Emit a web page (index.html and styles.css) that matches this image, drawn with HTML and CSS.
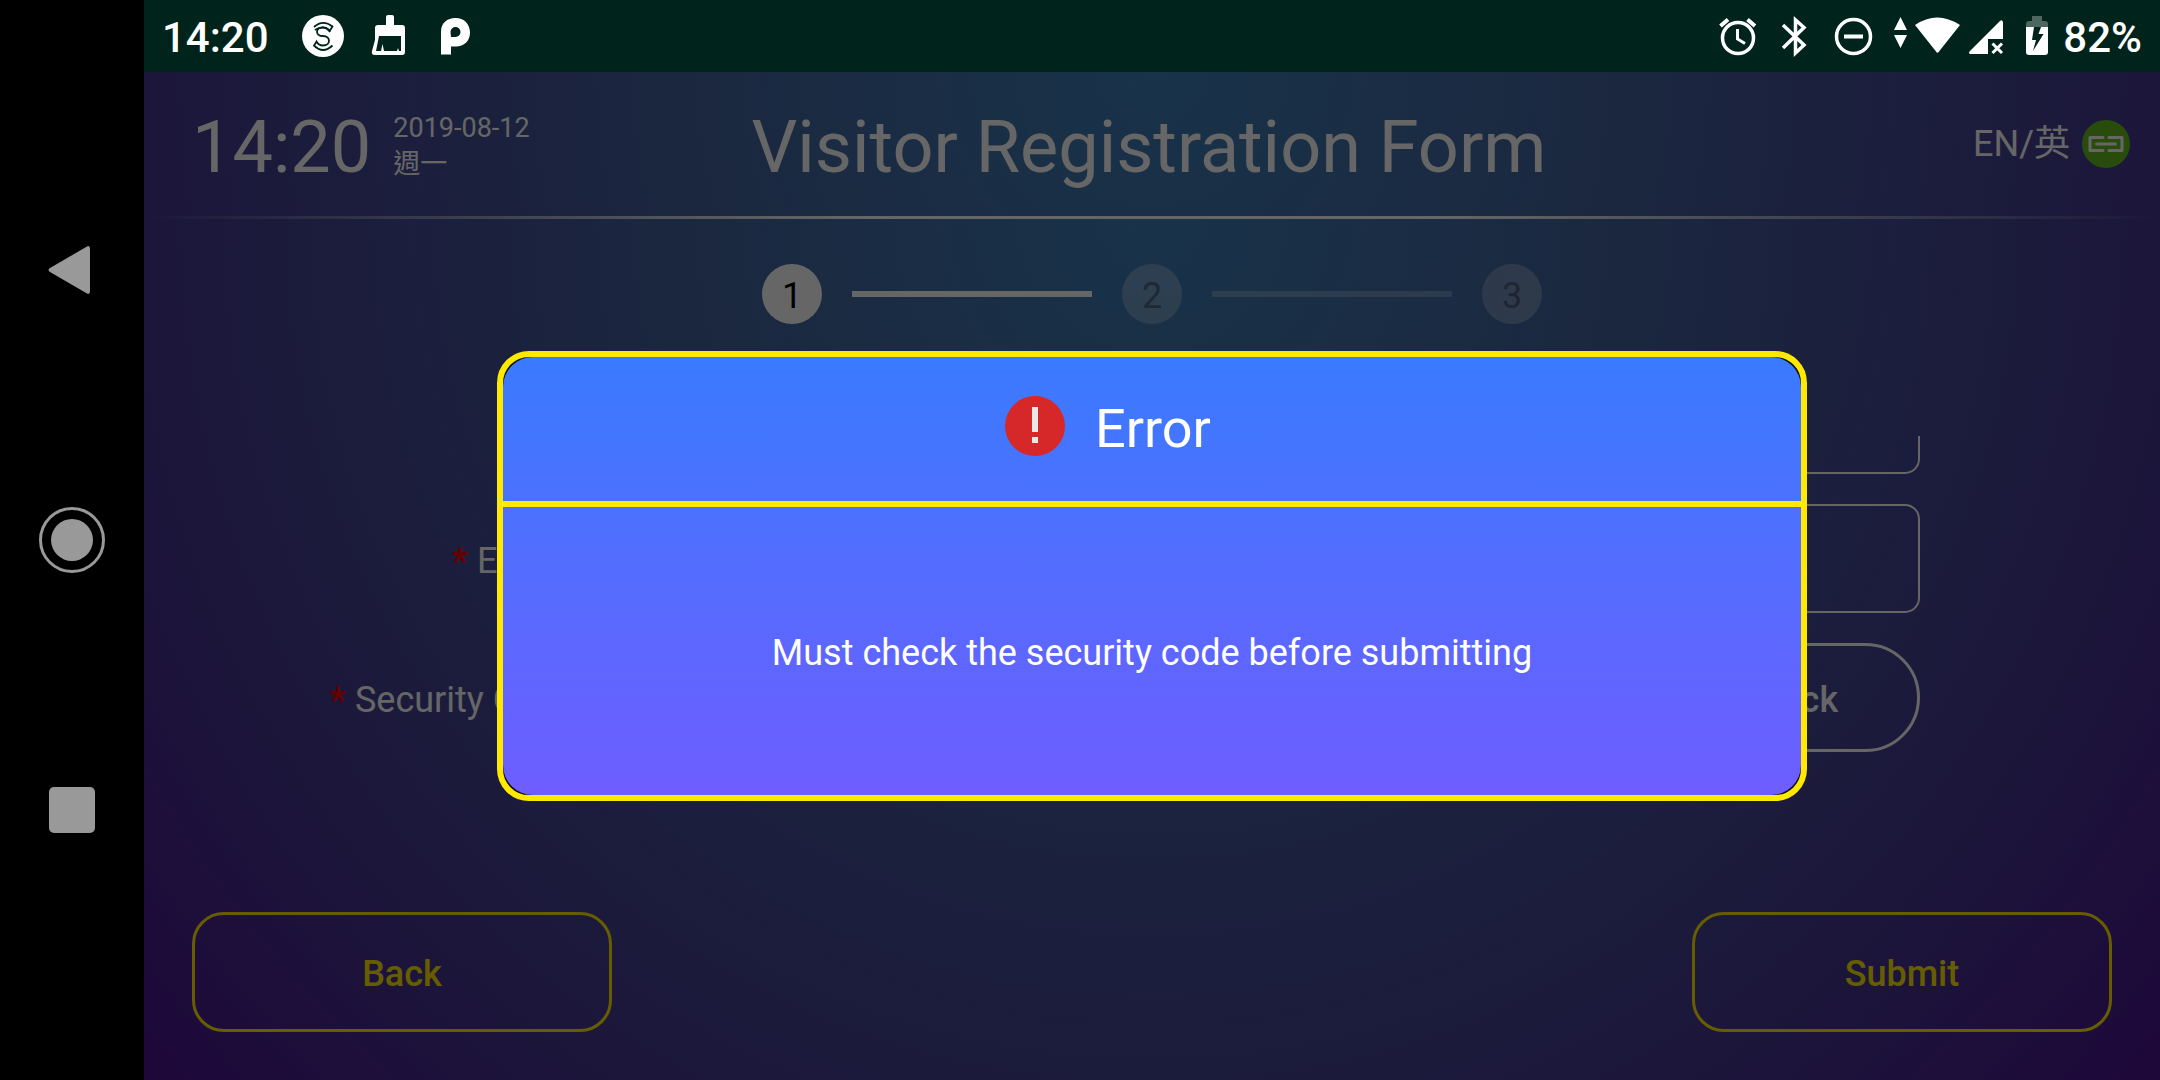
FILE: index.html
```html
<!DOCTYPE html>
<html lang="en">
<head>
  <meta charset="utf-8">
  <meta name="viewport" content="width=device-width, initial-scale=1">
  <title>Visitor Registration Form</title>
  <link rel="stylesheet" href="styles.css">
</head>
<body>
<div class="device">
  <nav class="navbar" aria-label="System navigation">
    <button class="navbar-button" type="button" aria-label="Back">
      <svg width="48" height="60" viewBox="0 0 48 60"><path d="M2 28 L39 6.5 Q42 5 42 9 V51 Q42 55 39 53.500 L2 32 Q-1 30 2 28Z" fill="#999"/></svg>
    </button>
    <button class="navbar-button" type="button" aria-label="Home">
      <svg width="66" height="66" viewBox="0 0 66 66"><circle cx="33" cy="33" r="31.500" fill="none" stroke="#999" stroke-width="3"/><circle cx="33" cy="33" r="21" fill="#999"/></svg>
    </button>
    <button class="navbar-button" type="button" aria-label="Recent apps">
      <svg width="46" height="46" viewBox="0 0 46 46"><rect width="46" height="46" rx="5" fill="#999"/></svg>
    </button>
  </nav>

  <div class="screen">
    <div class="statusbar">
      <div class="status-left">
        <span class="status-clock">14:20</span>
        <svg class="status-icon" viewBox="0 0 48 48"><circle cx="24" cy="24" r="21" fill="#fff"/><g fill="none" stroke="#00241b" stroke-width="1.800"><path d="M15 15Q24 7 33.500 14.500L31 18.500Q24 12.500 16 18"/><path d="M31 20Q28 15.500 24 15.500C16 15.500 16 24 24 24C32 24 32 33.500 24 33.500Q19.500 33.500 17.500 29.500L15 33.500Q24 42.500 33.500 33.500"/></g></svg>
        <svg class="status-icon" viewBox="0 0 48 48" fill="#fff"><path d="M21 5Q21 3 23 3H27Q29 3 29 5V13H37Q40 13 40 16V40Q40 43 37 43H10Q6 43 7 39L10 28V16Q10 13 13 13H21Z"/><path fill="#00241b" d="M14 24H36V39H34L33 36L32 39H19L17.500 32L16 39H11Z"/></svg>
        <svg class="status-icon" viewBox="0 0 48 48"><path fill="#fff" fill-rule="evenodd" d="M10 42.500V20C10 11 16 6 24.500 6C33 6 39 12 39 20.500C39 29 33 34.500 25 34.500H20V42.500ZM20 25H24.500A5 5 0 1 0 19.500 20Z"/></svg>
      </div>
      <div class="status-right">
        <svg class="status-icon" viewBox="0 0 48 48" fill="none" stroke="#fff"><circle cx="24" cy="26" r="15.500" stroke-width="3.500"/><path stroke-width="4" d="M6.500 14L14 7.500M41 14L33.500 7.500"/><path stroke-width="3" d="M23.500 17V27L31 31.500"/></svg>
        <svg class="status-icon" viewBox="0 0 48 48" fill="none" stroke="#fff" stroke-width="3.500"><path d="M11 13L32 33L23.500 41V8L32 15.500L11 36"/></svg>
        <svg class="status-icon" viewBox="0 0 48 48" fill="none" stroke="#fff"><circle cx="23.500" cy="24.500" r="17" stroke-width="3.500"/><path stroke-width="4" d="M14 24.500H33"/></svg>
        <svg class="status-icon status-wifi" viewBox="0 0 72 48" fill="#fff"><path d="M4 18L10.500 5L17 18ZM4 23H17L10.500 36Z"/><path d="M25 13Q47 -2 70 13L49 39.500Q47.500 42 46 39.500Z"/></svg>
        <svg class="status-icon status-signal" viewBox="0 0 40 48" fill="#fff"><path d="M37 10V27H22V42H4Q2 41 4 39L34 9Q36 7 37 10Z"/><path fill="none" stroke="#fff" stroke-width="3" d="M26.500 31.500L36 41M36 31.500L26.500 41"/></svg>
        <svg class="status-icon status-battery" viewBox="0 0 32 48"><path fill="#4d6660" d="M5 15V12Q5 9 8 9H11V4H21V9H24Q27 9 27 12V15Z"/><path fill="#fff" fill-rule="evenodd" d="M5 15H27V40Q27 43 24 43H8Q5 43 5 40ZM13 15L11 28H15L12 39L22.500 22H17.500L20 15Z"/></svg>
        <span class="status-percent">82%</span>
      </div>
    </div>

    <main class="app">
      <header class="app-header">
        <div class="clock">
          <span class="clock-time">14:20</span>
          <span class="clock-date">2019-08-12<br>週一</span>
        </div>
        <h1 class="app-title">Visitor Registration Form</h1>
        <div class="header-tools">
          <button class="language" type="button">EN/英</button>
          <svg class="link-badge" viewBox="0 0 48 48"><circle cx="24" cy="24" r="24" fill="#67be21"/><path fill="none" stroke="#fff" stroke-width="3" stroke-linecap="round" stroke-linejoin="round" d="M21 17.500H8V30.500H21M27 17.500H40V30.500H27M14.500 24H33.500"/></svg>
        </div>
      </header>

      <form class="form">
        <hr class="rule">
        <ol class="steps">
          <li class="step step-active">1</li>
          <li class="step-line step-line-active"></li>
          <li class="step">2</li>
          <li class="step-line"></li>
          <li class="step">3</li>
        </ol>
        <div class="fields">
          <div class="field">
            <input class="field-input" type="text" aria-label="Phone">
          </div>
          <div class="field">
            <label class="field-label" for="email"><span class="required">*</span> E-mail</label>
            <input class="field-input" id="email" type="email">
          </div>
          <div class="field">
            <label class="field-label" for="code"><span class="required">*</span> Security Code</label>
            <input class="field-input field-input-short" id="code" type="text">
            <button class="check" type="button">Check</button>
          </div>
        </div>
        <div class="actions">
          <button class="action" type="button">Back</button>
          <button class="action" type="submit">Submit</button>
        </div>
      </form>

      <div class="backdrop">
        <section class="dialog" role="alertdialog" aria-modal="true" aria-labelledby="dialog-title" aria-describedby="dialog-text">
          <div class="dialog-panel">
            <div class="dialog-header">
              <svg class="dialog-icon" viewBox="0 0 60 60"><circle cx="30" cy="30" r="30" fill="#d62828"/><path fill="#e8e8e8" d="M27 11H33V36H27ZM27 41H33V47H27Z"/></svg>
              <h2 class="dialog-title" id="dialog-title">Error</h2>
            </div>
            <p class="dialog-text" id="dialog-text">Must check the security code before submitting</p>
          </div>
        </section>
      </div>
    </main>
  </div>
</div>
</body>
</html>
```
FILE: styles.css
```css
:root {
  --glow: radial-gradient(circle 61vw at top, #3e80b8, #44649f 34%, #463992 76%, #4b1491);
  --yellow: #ffe900;
}

* {
  box-sizing: border-box;
}

body {
  margin: 0;
  background: #000;
  color: #fff;
  font-family: Roboto, "Noto Sans CJK TC", sans-serif;
  font-size: 36px;
}

button,
input {
  margin: 0;
  padding: 0;
  border: 0;
  background: none;
  color: inherit;
  font: inherit;
}

svg {
  display: block;
  flex: none;
}

.device {
  display: flex;
  min-height: 100vh;
}

/* System navigation */
.navbar {
  display: flex;
  flex: none;
  flex-direction: column;
  justify-content: center;
  width: 144px;
}

.navbar-button {
  display: flex;
  align-items: center;
  justify-content: center;
  height: 25vh;
}

.screen {
  display: flex;
  flex: 1;
  flex-direction: column;
  min-width: 0;
}

/* Status bar */
.statusbar {
  display: flex;
  align-items: center;
  justify-content: space-between;
  height: 72px;
  padding: 0 18px;
  background: #00241b;
  font-size: 42px;
  font-weight: 500;
  line-height: 48px;
}

.status-left,
.status-right {
  display: flex;
  align-items: center;
}

.status-left {
  gap: 18px;
}

.status-clock {
  margin-right: 12px;
}

.status-clock,
.status-percent {
  padding-top: 4px;
}

.status-right {
  gap: 10px;
}

.status-icon {
  width: 48px;
  height: 48px;
}

.status-wifi {
  width: 72px;
  margin-left: 2px;
}

.status-signal {
  width: 40px;
  margin-left: -6px;
}

.status-battery {
  width: 32px;
  margin-left: 5px;
}

/* Page */
.app {
  position: relative;
  display: flex;
  flex: 1;
  flex-direction: column;
}

.app-header {
  display: grid;
  grid-template-columns: 1fr auto 1fr;
  align-items: center;
  height: 144px;
  padding: 0 30px;
  background: var(--glow);
}

.clock {
  display: flex;
  align-items: center;
  gap: 22px;
  padding-left: 18px;
}

.clock-time {
  padding-top: 8px;
  font-size: 72px;
  line-height: 84px;
}

.clock-date {
  padding-top: 4px;
  font-size: 27px;
  line-height: 36px;
}

.app-title {
  margin: 0;
  padding: 8px 6px 0 0;
  font-size: 72px;
  font-weight: 400;
  line-height: 84px;
}

.header-tools {
  display: flex;
  align-items: center;
  justify-content: flex-end;
  gap: 12px;
}

.language {
  font-size: 36px;
  line-height: 48px;
}

.link-badge {
  width: 48px;
  height: 48px;
}

.form {
  display: flex;
  flex: 1;
  flex-direction: column;
  background: var(--glow);
}

.rule {
  width: 100%;
  height: 3px;
  margin: 0;
  border: 0;
  background: linear-gradient(to right, transparent, #fff 36%, #fff 64%, transparent);
}

.steps {
  display: flex;
  align-items: center;
  justify-content: center;
  gap: 30px;
  margin: 0;
  padding: 45px 0 0;
  list-style: none;
}

.step {
  width: 60px;
  height: 60px;
  border-radius: 50%;
  background: rgba(255, 255, 255, 0.26);
  color: rgba(0, 0, 0, 0.36);
  line-height: 64px;
  text-align: center;
}

.step-active {
  background: #fff;
  color: #000;
}

.step-line {
  width: 240px;
  height: 6px;
  background: rgba(255, 255, 255, 0.26);
}

.step-line-active {
  background: #fff;
}

/* The list is scrolled to its end, so the first row is cut off at the top */
.fields {
  display: flex;
  flex: 1 1 0;
  flex-direction: column;
  justify-content: flex-end;
  gap: 30px;
  margin-top: 112px;
  padding: 0 240px 112px 144px;
  overflow: hidden;
}

.field {
  display: flex;
  flex: none;
  justify-content: flex-end;
  gap: 24px;
  height: 109px;
}

.field-label {
  flex: 1;
  padding-right: 20px;
  line-height: 114px;
  text-align: right;
}

.required {
  color: #f00;
  font-weight: 700;
}

/* A short input leaves room for the 264px button and its 24px gap */
.field-input {
  width: calc(62% + 288px);
  border: 2px solid #fff;
  border-radius: 15px;
}

.field-input-short {
  width: 62%;
}

.check {
  flex: none;
  width: 264px;
  padding-top: 4px;
  border: 3px solid #fff;
  border-radius: 55px;
  font-weight: 500;
}

.actions {
  display: flex;
  justify-content: space-between;
  padding: 48px;
}

.action {
  width: 420px;
  height: 120px;
  padding-top: 4px;
  border: 3px solid var(--yellow);
  border-radius: 32px;
  color: var(--yellow);
  font-weight: 500;
}

/* Error dialog */
.backdrop {
  position: absolute;
  inset: 0;
  display: flex;
  align-items: center;
  justify-content: center;
  background: rgba(0, 0, 0, 0.6);
}

.dialog {
  width: 65%;
  border: 6px solid var(--yellow);
  border-radius: 32px;
  background: #111;
}

.dialog-panel {
  border-radius: 30px;
  background: linear-gradient(#3a7bff, #6e5dff);
}

.dialog-header {
  display: flex;
  align-items: center;
  justify-content: center;
  gap: 30px;
  height: 150px;
  padding: 0 88px 6px 0;
  border-bottom: 6px solid var(--yellow);
}

.dialog-icon {
  width: 60px;
  height: 60px;
}

.dialog-title {
  margin: 0;
  padding-top: 6px;
  font-size: 54px;
  font-weight: 400;
  line-height: 60px;
}

.dialog-text {
  margin: 0;
  padding: 122px 48px 118px;
  line-height: 48px;
  text-align: center;
}
```
